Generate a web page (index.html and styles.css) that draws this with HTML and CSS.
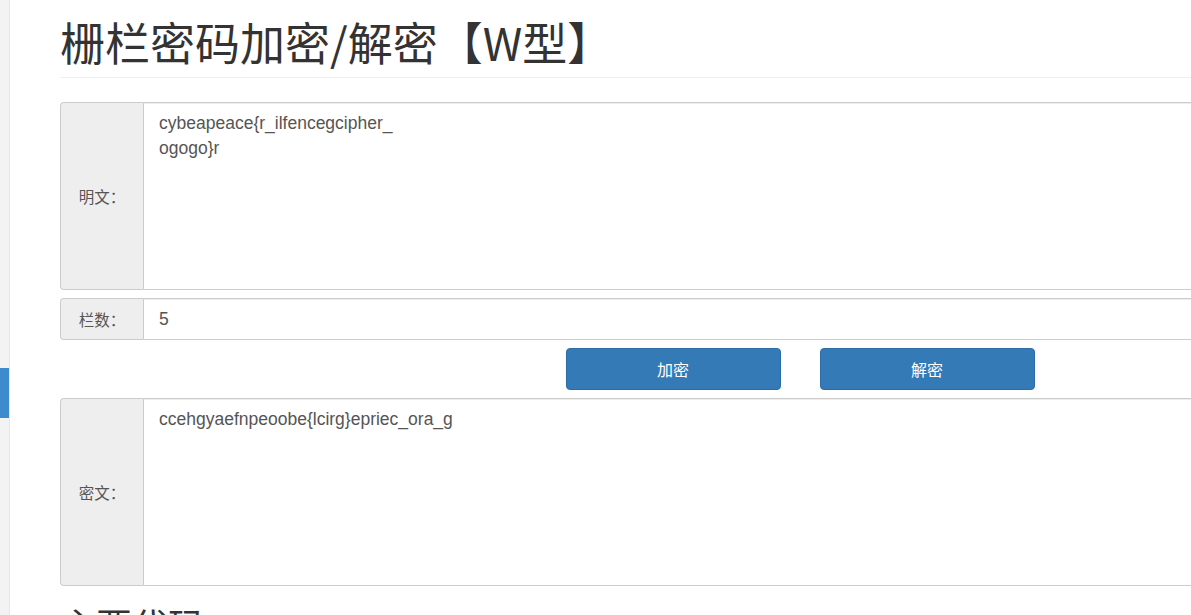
FILE: index.html
```html
<!DOCTYPE html>
<html lang="zh-CN">
<head>
    <meta charset="UTF-8">
    <title>栅栏密码加密/解密【W型】</title>
    <link rel="stylesheet" href="styles.css">
</head>
<body>
    <aside class="side-rail">
        <span class="side-mark"></span>
    </aside>

    <main class="page">
        <h1 class="page-title">栅栏密码加密/解密【W型】</h1>

        <form class="cipher-form">
            <div class="field-group field-area">
                <label class="field-label" for="plain">明文：</label>
                <textarea class="field-input" id="plain" spellcheck="false">cybeapeace{r_ilfencegcipher_
ogogo}r</textarea>
            </div>

            <div class="field-group field-line">
                <label class="field-label" for="rails">栏数：</label>
                <input class="field-input" type="text" id="rails" value="5">
            </div>

            <div class="actions">
                <button type="button" class="btn">加密</button>
                <button type="button" class="btn">解密</button>
            </div>

            <div class="field-group field-area">
                <label class="field-label" for="cipher">密文：</label>
                <textarea class="field-input" id="cipher" spellcheck="false">ccehgyaefnpeoobe{lcirg}epriec_ora_g</textarea>
            </div>
        </form>

        <h2 class="section-title">主要代码</h2>
    </main>
</body>
</html>
```

FILE: styles.css
```css
* {
    margin: 0;
    padding: 0;
    box-sizing: border-box;
}

html, body {
    overflow: hidden;
}

body {
    font-family: "Liberation Sans", "Noto Sans CJK SC", sans-serif;
    background: #fff;
    color: #333;
    display: flex;
    min-height: 100vh;
}

.side-rail {
    width: 10px;
    flex-shrink: 0;
    background: #f3f3f3;
    border-right: 1px solid #e6e6e6;
    padding-top: 368px;
}

.side-mark {
    display: block;
    width: 9px;
    height: 50px;
    background: #3d8bcd;
}

.page {
    flex-shrink: 0;
    width: 1530px;
    padding-left: 50px;
}

.page-title {
    font-family: "Noto Sans CJK SC", sans-serif;
    font-size: 45px;
    font-weight: 400;
    line-height: 50px;
    margin-top: 17px;
    padding-bottom: 10px;
    border-bottom: 1px solid #eee;
    color: #333;
    white-space: nowrap;
}

.cipher-form {
    margin-top: 24px;
    display: flex;
    flex-direction: column;
    gap: 8px;
}

.field-group {
    display: flex;
}

.field-area {
    height: 188px;
}

.field-line {
    height: 42px;
}

.field-label {
    width: 83px;
    flex-shrink: 0;
    display: flex;
    align-items: center;
    justify-content: center;
    background: #eee;
    border: 1px solid #ccc;
    border-right: 0;
    border-radius: 4px 0 0 4px;
    font-family: "Noto Sans CJK SC", sans-serif;
    font-size: 15.5px;
    color: #555;
}

.field-input {
    flex: 1;
    border: 1px solid #ccc;
    border-radius: 0 4px 4px 0;
    box-shadow: inset 0 1px 1px rgba(0, 0, 0, 0.075);
    font-family: "Liberation Sans", sans-serif;
    font-size: 17.5px;
    color: #555;
    padding: 0 15px;
    outline: none;
}

textarea.field-input {
    padding-top: 8px;
    line-height: 25px;
    resize: none;
}

input.field-input {
    line-height: 40px;
}

.actions {
    display: flex;
    justify-content: center;
    gap: 39px;
}

.btn {
    width: 215px;
    height: 42px;
    background: #337ab7;
    border: 1px solid #2e6da4;
    border-radius: 4px;
    color: #fff;
    font-family: "Noto Sans CJK SC", sans-serif;
    font-size: 16px;
    cursor: pointer;
}

.section-title {
    font-family: "Noto Sans CJK SC", sans-serif;
    font-size: 36px;
    font-weight: 400;
    line-height: 40px;
    margin-top: 18px;
    color: #333;
}
```
